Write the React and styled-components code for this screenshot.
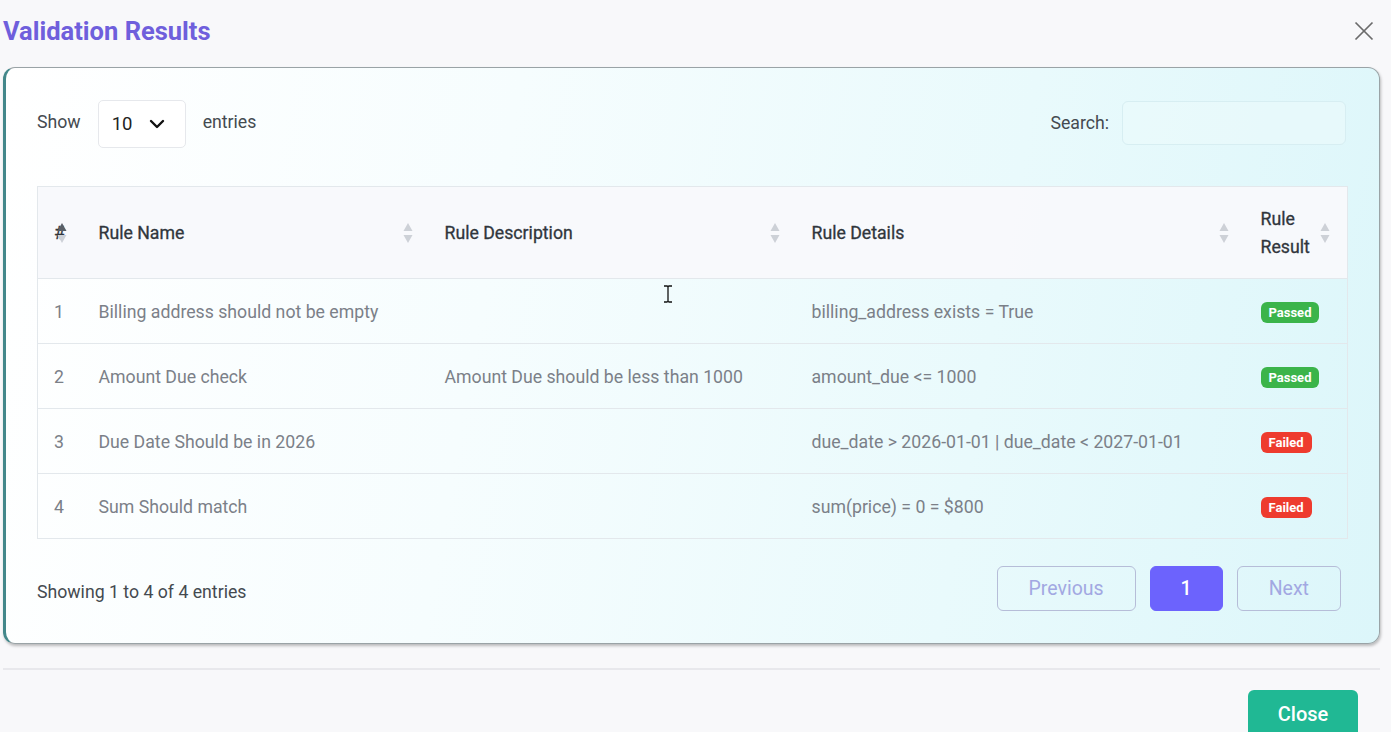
import React from "react";
import styled, { createGlobalStyle } from "styled-components";

const GlobalStyle = createGlobalStyle`
  html, body {
    margin: 0;
    padding: 0;
    background: #f8f8fa;
    font-family: Roboto, "Liberation Sans", Arial, sans-serif;
  }
  * { box-sizing: border-box; }
`;

const rules = [
  { id: 1, name: "Billing address should not be empty", desc: "", details: "billing_address exists = True", passed: true },
  { id: 2, name: "Amount Due check", desc: "Amount Due should be less than 1000", details: "amount_due <= 1000", passed: true },
  { id: 3, name: "Due Date Should be in 2026", desc: "", details: "due_date > 2026-01-01 | due_date < 2027-01-01", passed: false },
  { id: 4, name: "Sum Should match", desc: "", details: "sum(price) = 0 = $800", passed: false },
];

const columns = [
  { key: "id", label: "#", width: 46, active: true },
  { key: "name", label: "Rule Name", width: 346 },
  { key: "desc", label: "Rule Description", width: 367 },
  { key: "details", label: "Rule Details", width: 449 },
  { key: "result", label: "Rule Result", width: 102 },
];

function SortIcon({ active }) {
  return (
    <SortWrap>
      <svg width="10" height="22" viewBox="0 0 10 22">
        <polygon points="5,1 9.5,9 0.5,9" fill={active ? "#5a5f66" : "#cdd1d7"} />
        <polygon points="5,21 9.5,13 0.5,13" fill="#cdd1d7" />
      </svg>
    </SortWrap>
  );
}

export default function App() {
  return (
    <Page>
      <GlobalStyle />
      <TitleBar>
        <Title>Validation Results</Title>
        <CloseIcon aria-label="close">
          <svg width="20" height="20" viewBox="0 0 20 20">
            <line x1="1.5" y1="1.5" x2="18.5" y2="18.5" stroke="#6b6b6b" strokeWidth="1.7" />
            <line x1="18.5" y1="1.5" x2="1.5" y2="18.5" stroke="#6b6b6b" strokeWidth="1.7" />
          </svg>
        </CloseIcon>
      </TitleBar>

      <Card>
        <TopRow>
          <LengthControl>
            <span>Show</span>
            <Select>
              <span>10</span>
              <svg width="16" height="10" viewBox="0 0 16 10">
                <polyline points="2,2 8,8 14,2" fill="none" stroke="#111" strokeWidth="2.4" strokeLinecap="round" strokeLinejoin="round" />
              </svg>
            </Select>
            <span>entries</span>
          </LengthControl>
          <SearchControl>
            <span>Search:</span>
            <SearchInput type="text" />
          </SearchControl>
        </TopRow>

        <Table>
          <colgroup>
            {columns.map((c) => (
              <col key={c.key} style={{ width: c.width }} />
            ))}
          </colgroup>
          <thead>
            <tr>
              {columns.map((c) => (
                <Th key={c.key}>
                  <ThLabel $narrow={c.key === "result"}>{c.label}</ThLabel>
                  <SortIcon active={c.active} />
                </Th>
              ))}
            </tr>
          </thead>
          <tbody>
            {rules.map((r) => (
              <tr key={r.id}>
                <Td>{r.id}</Td>
                <Td>{r.name}</Td>
                <Td>{r.desc}</Td>
                <Td>{r.details}</Td>
                <Td>
                  <Badge $passed={r.passed}>{r.passed ? "Passed" : "Failed"}</Badge>
                </Td>
              </tr>
            ))}
          </tbody>
        </Table>

        <BottomRow>
          <Info>Showing 1 to 4 of 4 entries</Info>
          <Pager>
            <PageButton disabled>Previous</PageButton>
            <PageButton $active>1</PageButton>
            <PageButton disabled>Next</PageButton>
          </Pager>
        </BottomRow>
      </Card>

      <Divider />
      <Footer>
        <CloseButton>Close</CloseButton>
      </Footer>

      <Cursor>
        <svg width="10" height="18" viewBox="0 0 10 18">
          <path d="M1 1 H4 Q5 1 5 2.5 V15.5 Q5 17 4 17 H1 M9 1 H6 Q5 1 5 2.5 M5 15.5 Q5 17 6 17 H9" fill="none" stroke="#111" strokeWidth="1.3" />
        </svg>
      </Cursor>
    </Page>
  );
}

const Page = styled.div`
  position: relative;
  height: 732px;
  overflow: hidden;
`;

const TitleBar = styled.div`
  display: flex;
  align-items: center;
  justify-content: space-between;
  height: 62px;
  padding: 0 17px 0 3px;
`;

const Title = styled.h1`
  margin: 0;
  font-size: 25.5px;
  font-weight: 700;
  color: #6f5fdc;
`;

const CloseIcon = styled.div`
  display: flex;
  width: 20px;
  height: 20px;
  cursor: pointer;
`;

const Card = styled.div`
  margin: 5px 11px 0 3px;
  padding: 32px 33px 32px 31px;
  border: 1px solid #9aa3a6;
  border-left: 3px solid #43878a;
  border-radius: 12px;
  background: linear-gradient(100deg, #ffffff 0%, #f6fdfe 35%, #e9fafc 70%, #dcf6fa 100%);
  box-shadow: 1px 2px 3px rgba(0, 0, 0, 0.25);
`;

const TopRow = styled.div`
  display: flex;
  align-items: center;
  justify-content: space-between;
  height: 48px;
  margin-bottom: 38px;
  font-size: 17.7px;
  color: #444a50;
`;

const LengthControl = styled.div`
  display: flex;
  align-items: center;
  gap: 17px;
  margin-top: -4px;
`;

const Select = styled.div`
  display: flex;
  align-items: center;
  justify-content: space-between;
  width: 88px;
  height: 48px;
  padding: 0 20px 0 13px;
  margin-top: 4px;
  background: #ffffff;
  border: 1px solid #e6e8ec;
  border-radius: 5px;
  font-size: 18.5px;
  color: #222;
`;

const SearchControl = styled.div`
  display: flex;
  align-items: center;
  gap: 13px;
  margin-top: -2px;
`;

const SearchInput = styled.input`
  width: 224px;
  height: 44px;
  border: 1px solid #d7eef2;
  border-radius: 6px;
  background: rgba(235, 250, 252, 0.6);
  outline: none;
`;

const Table = styled.table`
  width: 1310px;
  table-layout: fixed;
  border-collapse: collapse;
  border: 1px solid #e3e8ec;
  font-size: 17.7px;
`;

const Th = styled.th`
  position: relative;
  height: 92px;
  padding: 0 34px 0 15px;
  text-align: left;
  font-weight: 400;
  color: #30363c;
  -webkit-text-stroke: 0.3px #30363c;
  background: rgba(248, 249, 252, 0.96);
  border-bottom: 1px solid #e3e8ec;
  line-height: 28px;
  &:first-child { padding-left: 16px; padding-right: 0; }
`;

const ThLabel = styled.span`
  display: block;
  max-width: ${(p) => (p.$narrow ? "52px" : "none")};
`;

const SortWrap = styled.span`
  position: absolute;
  right: 17px;
  top: 50%;
  transform: translateY(-50%);
  display: flex;
`;

const Td = styled.td`
  height: 65px;
  padding: 1px 15px 0;
  color: #7b8088;
  border-bottom: 1px solid #e3e8ec;
  white-space: nowrap;
  &:first-child { padding-left: 16px; }
`;

const Badge = styled.span`
  display: inline-flex;
  align-items: center;
  height: 21px;
  padding: 0 8px;
  border-radius: 6px;
  font-size: 13px;
  font-weight: 700;
  color: #ffffff;
  background: ${(p) => (p.$passed ? "#3bb44a" : "#ee3b2e")};
`;

const BottomRow = styled.div`
  display: flex;
  align-items: center;
  justify-content: space-between;
  margin-top: 27px;
  padding-right: 5px;
`;

const Info = styled.div`
  font-size: 17.7px;
  color: #444a50;
  margin-top: 6px;
`;

const Pager = styled.div`
  display: flex;
  gap: 14px;
`;

const PageButton = styled.button`
  height: 45px;
  padding: 0 ${(p) => (p.$active ? "30px" : "31px")};
  border-radius: 6px;
  font-family: inherit;
  font-size: 19.5px;
  border: 1px solid ${(p) => (p.$active ? "#6c63fd" : "#b6bdd8")};
  background: ${(p) => (p.$active ? "#6c63fd" : "transparent")};
  color: ${(p) => (p.$active ? "#ffffff" : "#a2a8e2")};
  font-weight: ${(p) => (p.$active ? 500 : 400)};
  cursor: pointer;
  &:disabled { cursor: default; }
`;

const Divider = styled.hr`
  margin: 24px 11px 0 3px;
  border: 0;
  border-top: 2px solid #e8e8ec;
`;

const Footer = styled.div`
  display: flex;
  justify-content: flex-end;
  padding: 20px 33px 0 0;
`;

const CloseButton = styled.button`
  width: 110px;
  height: 48px;
  border: 0;
  border-radius: 6px;
  background: #20b894;
  color: #ffffff;
  font-family: inherit;
  font-size: 20px;
  font-weight: 500;
  cursor: pointer;
`;

const Cursor = styled.div`
  position: absolute;
  left: 663px;
  top: 285px;
  pointer-events: none;
`;
